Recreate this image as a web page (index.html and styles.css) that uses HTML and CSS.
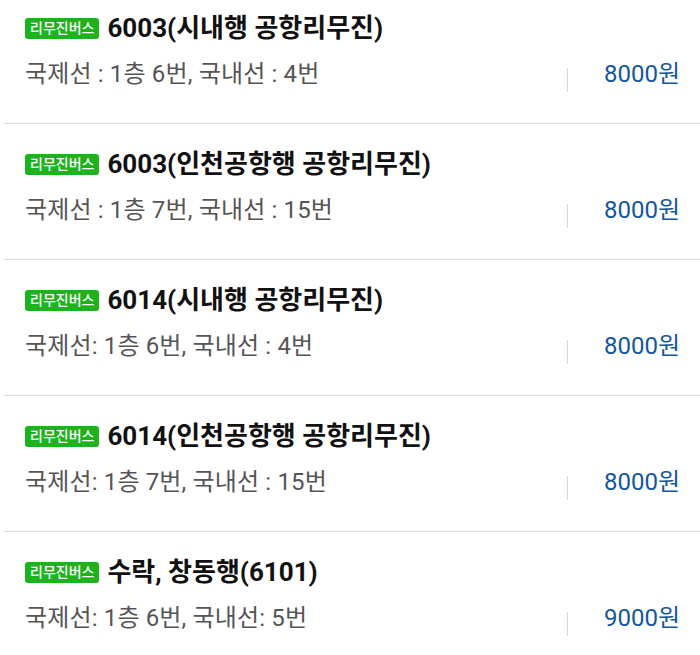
FILE: index.html
```html
<!DOCTYPE html>
<html lang="ko">
<head>
    <meta charset="UTF-8">
    <meta name="viewport" content="width=device-width, initial-scale=1.0">
    <title>공항리무진 노선</title>
    <link rel="stylesheet" href="styles.css">
</head>
<body>

    <ul class="routes">
        <li class="route">
            <div class="route-title">
                <span class="badge">리무진버스</span>
                <span class="name">6003(시내행 공항리무진)</span>
            </div>
            <div class="route-info">
                <span class="stops">국제선 : 1층 6번, 국내선 : 4번</span>
                <span class="divider"></span>
                <span class="price">8000원</span>
            </div>
        </li>
        <li class="route">
            <div class="route-title">
                <span class="badge">리무진버스</span>
                <span class="name">6003(인천공항행 공항리무진)</span>
            </div>
            <div class="route-info">
                <span class="stops">국제선 : 1층 7번, 국내선 : 15번</span>
                <span class="divider"></span>
                <span class="price">8000원</span>
            </div>
        </li>
        <li class="route">
            <div class="route-title">
                <span class="badge">리무진버스</span>
                <span class="name">6014(시내행 공항리무진)</span>
            </div>
            <div class="route-info">
                <span class="stops">국제선: 1층 6번, 국내선 : 4번</span>
                <span class="divider"></span>
                <span class="price">8000원</span>
            </div>
        </li>
        <li class="route">
            <div class="route-title">
                <span class="badge">리무진버스</span>
                <span class="name">6014(인천공항행 공항리무진)</span>
            </div>
            <div class="route-info">
                <span class="stops">국제선: 1층 7번, 국내선 : 15번</span>
                <span class="divider"></span>
                <span class="price">8000원</span>
            </div>
        </li>
        <li class="route">
            <div class="route-title">
                <span class="badge">리무진버스</span>
                <span class="name">수락, 창동행(6101)</span>
            </div>
            <div class="route-info">
                <span class="stops">국제선: 1층 6번, 국내선: 5번</span>
                <span class="divider"></span>
                <span class="price">9000원</span>
            </div>
        </li>
    </ul>

</body>
</html>
```

FILE: styles.css
```css
body {
    font-family: Roboto, "Noto Sans CJK KR", sans-serif;
    background-color: #fff;
    color: #111;
    margin: 0;
    overflow: hidden; /* list is scrolled a little */
}

.routes {
    list-style: none;
    margin: -12px 0 0 4px; /* scrolled: first row is cut off at the top */
    padding: 0;
}

.route {
    padding: 29px 20px 35px 21px;
    border-bottom: 1px solid #dcdcdc;
}

.route-title {
    display: flex;
    align-items: center;
    height: 22px;
    margin-bottom: 21px;
}

.badge {
    background-color: #1cb31c;
    color: #fff;
    font-size: 14px;
    font-weight: 500;
    line-height: 21px;
    height: 21px;
    padding: 0 5px;
    border-radius: 3px;
    margin-right: 8px;
    white-space: nowrap;
}

.name {
    font-size: 26px;
    font-weight: 700;
    line-height: 22px;
    white-space: nowrap;
}

.route-info {
    display: flex;
    align-items: flex-start;
    height: 28px;
    line-height: 28px;
    font-size: 24px;
}

.stops {
    flex: 1;
    color: #555;
    letter-spacing: 0.15px;
    white-space: nowrap;
}

.divider {
    width: 1px;
    height: 24px;
    margin-top: 8px;
    background-color: #d6d6d6;
}

.price {
    width: 100px;
    text-align: right;
    color: #15579b;
    margin-left: 12px;
}
```
